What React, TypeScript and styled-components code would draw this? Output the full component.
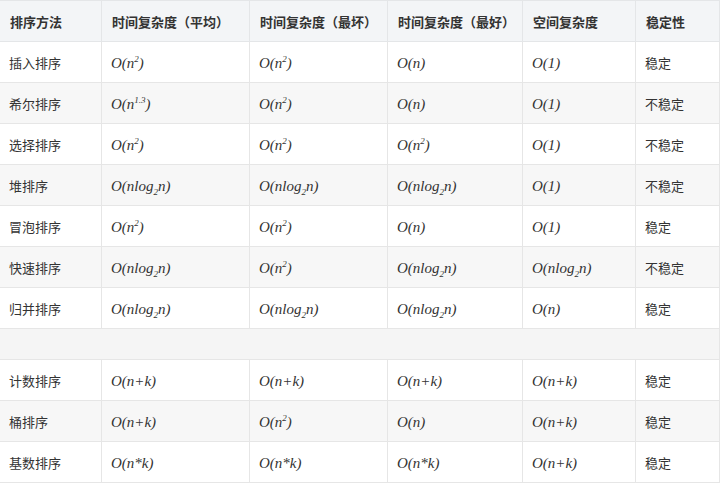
import React from 'react';
import styled, { createGlobalStyle } from 'styled-components';

const GlobalStyle = createGlobalStyle`
  html, body {
    margin: 0;
    padding: 0;
    background: #ffffff;
  }
  body {
    font-family: "Noto Sans CJK SC", "Noto Sans", sans-serif;
    color: #333;
  }
`;

const Table = styled.table`
  border-collapse: collapse;
  table-layout: fixed;
  width: 720px;
  margin-left: -1px;
  font-size: 13px;
`;

const HeadCell = styled.th`
  height: 40px;
  padding: 0 10px;
  text-align: left;
  font-weight: bold;
  background: #f3f5f7;
  border: 1px solid #e4e6e8;
  white-space: nowrap;
  color: #333;
`;

const Row = styled.tr<{ $shaded?: boolean }>`
  background: ${(p) => (p.$shaded ? '#f7f7f7' : '#ffffff')};
`;

const Cell = styled.td`
  height: 40px;
  padding: 0 9px;
  border: 1px solid #e6e6e6;
  white-space: nowrap;
  color: #333;
`;

const Spacer = styled.td`
  height: 28px;
  border: 1px solid #e6e6e6;
  background: #f5f5f5;
`;

const Math = styled.span`
  font-family: "Liberation Serif", "DejaVu Serif", serif;
  font-style: italic;
  font-size: 15px;
  color: #333;
  sup, sub {
    font-size: 9px;
    line-height: 0;
  }
`;

type Cx = 'n2' | 'n' | '1' | 'nlogn' | 'n13' | 'nk' | 'n*k';

const Complexity = ({ v }: { v: Cx }) => {
  switch (v) {
    case 'n2':
      return <Math>O(n<sup>2</sup>)</Math>;
    case 'n':
      return <Math>O(n)</Math>;
    case '1':
      return <Math>O(1)</Math>;
    case 'nlogn':
      return (
        <Math>
          O(nlog<sub>2</sub>n)
        </Math>
      );
    case 'n13':
      return <Math>O(n<sup>1.3</sup>)</Math>;
    case 'nk':
      return <Math>O(n+k)</Math>;
    case 'n*k':
      return <Math>O(n*k)</Math>;
  }
};

const headers = ['排序方法', '时间复杂度（平均）', '时间复杂度（最坏）', '时间复杂度（最好）', '空间复杂度', '稳定性'];
const widths = [102, 148, 138, 135, 113, 84];

type RowData = [string, Cx, Cx, Cx, Cx, string];

const top: RowData[] = [
  ['插入排序', 'n2', 'n2', 'n', '1', '稳定'],
  ['希尔排序', 'n13', 'n2', 'n', '1', '不稳定'],
  ['选择排序', 'n2', 'n2', 'n2', '1', '不稳定'],
  ['堆排序', 'nlogn', 'nlogn', 'nlogn', '1', '不稳定'],
  ['冒泡排序', 'n2', 'n2', 'n', '1', '稳定'],
  ['快速排序', 'nlogn', 'n2', 'nlogn', 'nlogn', '不稳定'],
  ['归并排序', 'nlogn', 'nlogn', 'nlogn', 'n', '稳定'],
];

const bottom: RowData[] = [
  ['计数排序', 'nk', 'nk', 'nk', 'nk', '稳定'],
  ['桶排序', 'nk', 'n2', 'n', 'nk', '稳定'],
  ['基数排序', 'n*k', 'n*k', 'n*k', 'nk', '稳定'],
];

const DataRow = ({ r, shaded }: { r: RowData; shaded: boolean }) => (
  <Row $shaded={shaded}>
    <Cell>{r[0]}</Cell>
    <Cell><Complexity v={r[1]} /></Cell>
    <Cell><Complexity v={r[2]} /></Cell>
    <Cell><Complexity v={r[3]} /></Cell>
    <Cell><Complexity v={r[4]} /></Cell>
    <Cell>{r[5]}</Cell>
  </Row>
);

export default function App() {
  return (
    <>
      <GlobalStyle />
      <Table>
        <colgroup>
          {widths.map((w, i) => (
            <col key={i} style={{ width: w }} />
          ))}
        </colgroup>
        <thead>
          <tr>
            {headers.map((h) => (
              <HeadCell key={h}>{h}</HeadCell>
            ))}
          </tr>
        </thead>
        <tbody>
          {top.map((r, i) => (
            <DataRow key={r[0]} r={r} shaded={i % 2 === 1} />
          ))}
          <Row $shaded>
            <Spacer colSpan={6} />
          </Row>
          {bottom.map((r, i) => (
            <DataRow key={r[0]} r={r} shaded={i % 2 === 1} />
          ))}
        </tbody>
      </Table>
    </>
  );
}
